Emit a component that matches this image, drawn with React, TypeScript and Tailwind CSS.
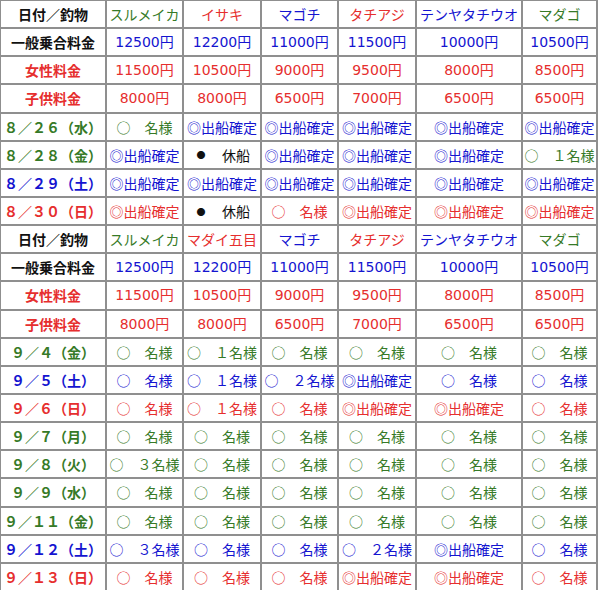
import React from "react";

const G = "text-[#367a27]";
const B = "text-[#1414d0]";
const R = "text-[#e62e2e]";
const K = "text-[#111111]";

type Cell = [string, string];
type Row = { label: string; color: string; cells: Cell[]; header?: boolean; price?: boolean };

const KAKU = "◎出船確定";
const MEI = "○　名様";

const header1: Row = {
  label: "日付／釣物",
  color: K,
  header: true,
  cells: [
    ["スルメイカ", G],
    ["イサキ", R],
    ["マゴチ", B],
    ["タチアジ", R],
    ["テンヤタチウオ", B],
    ["マダゴ", G],
  ],
};
const header2: Row = {
  label: "日付／釣物",
  color: K,
  header: true,
  cells: [
    ["スルメイカ", G],
    ["マダイ五目", R],
    ["マゴチ", B],
    ["タチアジ", R],
    ["テンヤタチウオ", B],
    ["マダゴ", G],
  ],
};
const prices: Row[] = [
  {
    label: "一般乗合料金",
    color: K,
    price: true,
    cells: [
      ["12500円", B],
      ["12200円", B],
      ["11000円", B],
      ["11500円", B],
      ["10000円", B],
      ["10500円", B],
    ],
  },
  {
    label: "女性料金",
    color: R,
    price: true,
    cells: [
      ["11500円", R],
      ["10500円", R],
      ["9000円", R],
      ["9500円", R],
      ["8000円", R],
      ["8500円", R],
    ],
  },
  {
    label: "子供料金",
    color: R,
    price: true,
    cells: [
      ["8000円", R],
      ["8000円", R],
      ["6500円", R],
      ["7000円", R],
      ["6500円", R],
      ["6500円", R],
    ],
  },
];

const section1: Row[] = [
  {
    label: "８／２６（水）",
    color: G,
    cells: [
      [MEI, G],
      [KAKU, B],
      [KAKU, B],
      [KAKU, B],
      [KAKU, B],
      [KAKU, B],
    ],
  },
  {
    label: "８／２８（金）",
    color: G,
    cells: [
      [KAKU, B],
      ["●休船", K],
      [KAKU, B],
      [KAKU, B],
      [KAKU, B],
      ["○　１名様", G],
    ],
  },
  {
    label: "８／２９（土）",
    color: B,
    cells: [
      [KAKU, B],
      [KAKU, B],
      [KAKU, B],
      [KAKU, B],
      [KAKU, B],
      [KAKU, B],
    ],
  },
  {
    label: "８／３０（日）",
    color: R,
    cells: [
      [KAKU, R],
      ["●休船", K],
      [MEI, R],
      [KAKU, R],
      [KAKU, R],
      [KAKU, R],
    ],
  },
];

const allMei = (c: string): Cell[] => [
  [MEI, c],
  [MEI, c],
  [MEI, c],
  [MEI, c],
  [MEI, c],
  [MEI, c],
];

const section2: Row[] = [
  {
    label: "９／４（金）",
    color: G,
    cells: [
      [MEI, G],
      ["○　１名様", G],
      [MEI, G],
      [MEI, G],
      [MEI, G],
      [MEI, G],
    ],
  },
  {
    label: "９／５（土）",
    color: B,
    cells: [
      [MEI, B],
      ["○　１名様", B],
      ["○　２名様", B],
      [KAKU, B],
      [MEI, B],
      [MEI, B],
    ],
  },
  {
    label: "９／６（日）",
    color: R,
    cells: [
      [MEI, R],
      ["○　１名様", R],
      [MEI, R],
      [KAKU, R],
      [KAKU, R],
      [MEI, R],
    ],
  },
  { label: "９／７（月）", color: G, cells: allMei(G) },
  {
    label: "９／８（火）",
    color: G,
    cells: [
      ["○　３名様", G],
      [MEI, G],
      [MEI, G],
      [MEI, G],
      [MEI, G],
      [MEI, G],
    ],
  },
  { label: "９／９（水）", color: G, cells: allMei(G) },
  { label: "９／１１（金）", color: G, cells: allMei(G) },
  {
    label: "９／１２（土）",
    color: B,
    cells: [
      ["○　３名様", B],
      [MEI, B],
      [MEI, B],
      ["○　２名様", B],
      [KAKU, B],
      [MEI, B],
    ],
  },
  {
    label: "９／１３（日）",
    color: R,
    cells: [
      [MEI, R],
      [MEI, R],
      [MEI, R],
      [KAKU, R],
      [KAKU, R],
      [MEI, R],
    ],
  },
];

const rows: Row[] = [header1, ...prices, ...section1, header2, ...prices, ...section2];

const cellBase =
  "flex items-center justify-center whitespace-nowrap border-r-2 border-b-2 border-[#8f8f8f] overflow-hidden";

function CellText({ text }: { text: string }) {
  if (text.startsWith("●")) {
    return (
      <span className="flex items-center">
        <span className="inline-block w-[14px] text-center text-[9px]">{"●"}</span>
        <span>{"\u3000" + text.slice(1)}</span>
      </span>
    );
  }
  return <span>{text}</span>;
}

export default function App() {
  return (
    <div className="w-[600px] h-[590px] overflow-hidden bg-white font-['Noto_Sans_CJK_JP',sans-serif] text-[14px] leading-none">
      <div className="grid w-[598px] grid-cols-[107px_77px_78px_77px_78px_106px_75px] auto-rows-[28.15px] border-t border-[#8f8f8f]">
        {rows.map((row, ri) => (
          <React.Fragment key={ri}>
            <div className={`${cellBase} border-l font-bold ${row.color}`}>{row.label}</div>
            {row.cells.map(([t, c], ci) => (
              <div
                key={ci}
                className={`${cellBase} ${c} ${row.price ? "font-['DejaVu_Sans','Noto_Sans_CJK_JP',sans-serif]" : ""}`}
              >
                <CellText text={t} />
              </div>
            ))}
          </React.Fragment>
        ))}
      </div>
    </div>
  );
}
